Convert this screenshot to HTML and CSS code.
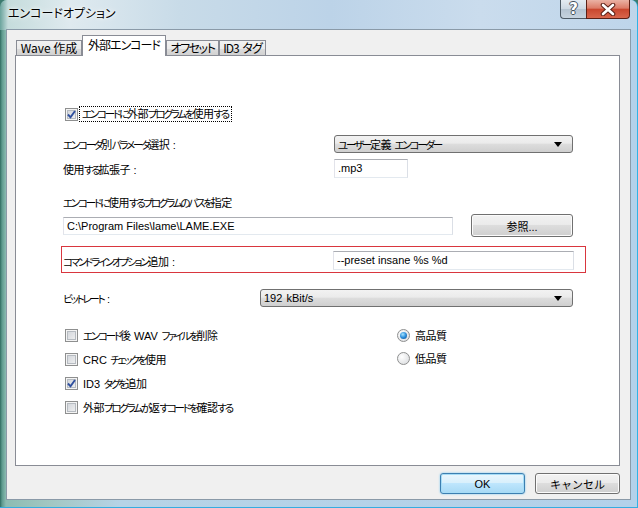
FILE: index.html
```html
<!DOCTYPE html>
<html lang="ja">
<head>
<meta charset="UTF-8">
<link rel="stylesheet" href="styles.css">
<title>エンコードオプション</title>
</head>
<body>

<div class="window">
  <div class="titlebar">
    <span class="title">エンコードオプション</span>
    <div class="caption-buttons">
      <span class="cap-btn help">?</span>
      <span class="cap-btn close">
        <svg width="18" height="13" viewBox="0 0 18 13">
          <path d="M4 2 L14 11 M14 2 L4 11" stroke="#5b2016" stroke-width="4.6" stroke-linecap="round"/>
          <path d="M4 2 L14 11 M14 2 L4 11" stroke="#fff" stroke-width="2.6" stroke-linecap="round"/>
        </svg>
      </span>
    </div>
  </div>

  <div class="client">
    <div class="tabs">
      <span class="tab t-wave">Wave 作成</span>
      <span class="tab t-ext active">外部エンコード</span>
      <span class="tab t-off">オフセット</span>
      <span class="tab t-id3">ID3 タグ</span>
    </div>

    <div class="panel">
      <!-- kana runs are narrowed (.k) to get the width of the old UI font -->
      <div class="row check-row first">
        <span class="check on"><svg width="11" height="11" viewBox="0 0 11 11"><path d="M2 5.5 L4.5 8.3 L9 2" fill="none" stroke="#2f4f9e" stroke-width="1.9"/></svg></span>
        <span class="focus-label"><span class="k">エンコードに</span>外部<span class="k">プログラムを</span>使用<span class="k">する</span></span>
      </div>

      <div class="row field-row param">
        <span><span class="k">エンコーダ</span>別<span class="k">パラメータ</span>選択 :</span>
        <div class="combo wide"><span><span class="k">ユーザー</span>定義 <span class="k">エンコーダー</span></span><span class="arrow"></span></div>
      </div>

      <div class="row field-row ext">
        <span>使用<span class="k">する</span>拡張子 :</span>
        <div class="field short">.mp3</div>
      </div>

      <div class="row path-label"><span class="k">エンコードに</span>使用<span class="k">するプログラムのパスを</span>指定</div>

      <div class="row path-row">
        <div class="field path">C:\Program Files\lame\LAME.EXE</div>
        <button class="btn browse">参照...</button>
      </div>

      <div class="cmd-row">
        <span><span class="k">コマンドラインオプション</span>追加 :</span>
        <div class="field cmd">--preset insane %s %d</div>
      </div>

      <div class="row bitrate-row">
        <span><span class="k">ビットレート</span> :</span>
        <div class="combo"><span class="lat">192 kBit/s</span><span class="arrow"></span></div>
      </div>

      <div class="options">
        <div class="opt-col">
          <div class="opt"><span class="check"></span><span><span class="k">エンコード</span>後 <span class="lat">WAV</span> <span class="k">ファイルを</span>削除</span></div>
          <div class="opt"><span class="check"></span><span><span class="lat">CRC</span> <span class="k">チェックを</span>使用</span></div>
          <div class="opt"><span class="check on"><svg width="11" height="11" viewBox="0 0 11 11"><path d="M2 5.5 L4.5 8.3 L9 2" fill="none" stroke="#2f4f9e" stroke-width="1.9"/></svg></span><span><span class="lat">ID3</span> <span class="k">タグを</span>追加</span></div>
          <div class="opt"><span class="check"></span><span>外部<span class="k">プログラムが</span>返<span class="k">すコードを</span>確認<span class="k">する</span></span></div>
        </div>
        <div class="radio-col">
          <div class="opt"><span class="radio on"></span><span>高品質</span></div>
          <div class="opt"><span class="radio"></span><span>低品質</span></div>
        </div>
      </div>
    </div>

    <div class="footer">
      <button class="btn default">OK</button>
      <button class="btn">キャンセル</button>
    </div>
  </div>
</div>

</body>
</html>
```

FILE: styles.css
```css
html, body {margin: 0; padding: 0;}
body {width: 638px; height: 508px; overflow: hidden; background: #3c7a6e;
  font-family: "Liberation Sans", "Noto Sans CJK JP", sans-serif; font-size: 11px;
  color: #000; font-feature-settings: "palt";}

/* window frame */
.window {
  box-sizing: border-box; width: 638px; height: 508px; padding: 0 7px 8px 7px;
  display: flex; flex-direction: column;
  background: linear-gradient(to right, #2f6b60 0, #5d9a8e 2px, #8cbcb2 6px, #a2c7c2 50px, #b6d3e6 120px, #b3d1ea 100%);
  border-right: 1px solid #2fb3e6; border-bottom: 1px solid #35ace0;
  border-radius: 7px 7px 0 0;
}
.titlebar {
  height: 30px; margin: 0 -7px; padding: 0 7px 0 8px;
  display: flex; justify-content: space-between; align-items: flex-start;
  border-radius: 7px 7px 0 0;
  background: linear-gradient(to right, #6aa39c 0, #c5dcdc 8px, #dfeaef 70px, #c8dbe8 180px, #bcd3e8 330px, #cadced 480px, #bed5ea 100%);
}
.title {line-height: 26px; font-size: 12px; font-family: "Noto Sans CJK JP", sans-serif;
  text-shadow: 0 0 6px #fff, 0 0 3px #fff;}
.caption-buttons {display: flex;}
.cap-btn {box-sizing: border-box; height: 19px; display: flex; align-items: center; justify-content: center;
  border: 1px solid #4d5a66; border-top: none;}
.help {width: 26px; border-radius: 0 0 0 4px; border-right: none;
  background: linear-gradient(#e4ebf2, #cdd8e3 50%, #b4c3d1 51%, #c6d3df);
  color: #fff; font: bold 15px "DejaVu Sans", sans-serif;
  text-shadow: 1px 0 #45515c, -1px 0 #45515c, 0 1px #45515c, 0 -1px #45515c;}
.close {width: 44px; border-radius: 0 0 4px 0; border-color: #5b2016;
  background: linear-gradient(#eab2a4, #dc7c68 45%, #c9472f 52%, #d8664c);}

.client {
  flex: 1; display: flex; flex-direction: column; padding: 0 10px 0 8px;
  background: #f0f0f0; box-shadow: 0 0 0 1px #8a9aa8;
}

/* tabs */
.tabs {display: flex; align-items: flex-end; height: 26px; padding-left: 1px;}
.tab {box-sizing: border-box; height: 16px; border: 1px solid #898c95; border-bottom: none;
  background: linear-gradient(#f2f2f2, #ebebeb 50%, #dddddd 51%, #cfcfcf);
  font-family: "Noto Sans CJK JP", sans-serif; font-size: 12px; letter-spacing: -1px; word-spacing: 2px;
  line-height: 14px; text-align: center; white-space: nowrap;}
.tab.active {height: 21px; background: #fff; position: relative; z-index: 1; line-height: 18px;}
.t-wave {width: 66px; letter-spacing: 0; word-spacing: 0;}
.t-ext {width: 84px;}
.t-off {width: 53px; letter-spacing: -1.4px;}
.t-id3 {width: 47px;}

.panel {box-sizing: border-box; height: 411px; margin-top: -1px; padding-left: 47px;
  border: 1px solid #898c95; background: #fff; letter-spacing: -0.5px; word-spacing: 1px;}
.k {font-size: 10.5px; letter-spacing: -2.2px;}
.lat {letter-spacing: 0;}

/* rows */
.row {display: flex; align-items: center; white-space: nowrap;}
.check-row {height: 16px; margin-top: 50px; padding-left: 2px;}
.focus-label {margin-left: 2px; padding: 0 3px 0 2px; line-height: 14px; outline: 1px dotted #000;}
.field-row {display: grid; grid-template-columns: 271px auto; align-items: center;}
.param {margin-top: 13px; height: 18px;}
.ext {margin-top: 6px; height: 19px;}
.path-label {margin-top: 16px; height: 16px;}
.path-row {margin-top: 4px; height: 23px; gap: 18px;}
.bitrate-row {display: grid; grid-template-columns: 197px auto; margin-top: 16px; height: 18px;}

.cmd-row {box-sizing: border-box; width: 525px; height: 27px; margin: 9px 0 0 -2px;
  padding: 2px 0 0 1px; border: 1px solid #d9363e;
  display: grid; grid-template-columns: 270px 241px; align-items: center; white-space: nowrap;}

/* controls */
.field {box-sizing: border-box; height: 19px; padding: 0 3px; line-height: 17px; background: #fff;
  letter-spacing: 0; word-spacing: 0; border: 1px solid; border-color: #abadb3 #dbdfe6 #e3e9ef #e2e3ea;}
.field.short {width: 74px;}
.field.path {width: 390px; height: 18px; line-height: 16px;}
.field.cmd {width: 241px;}

.combo {box-sizing: border-box; width: 313px; height: 18px; padding: 0 10px 0 3px;
  display: flex; align-items: center; justify-content: space-between;
  border: 1px solid #707070; border-radius: 3px;
  background: linear-gradient(#f2f2f2, #ebebeb 45%, #dddddd 50%, #cfcfcf);}
.combo.wide {width: 239px;}
.arrow {width: 0; height: 0; border-left: 4px solid transparent; border-right: 4px solid transparent;
  border-top: 5px solid #000;}

.btn {box-sizing: border-box; width: 85px; height: 21px; padding: 0;
  border: 1px solid #707070; border-radius: 3px;
  background: linear-gradient(#f2f2f2, #ebebeb 45%, #dddddd 50%, #cfcfcf);
  font: 11px "Liberation Sans", "Noto Sans CJK JP", sans-serif; letter-spacing: 0; word-spacing: 0; color: #000;
  box-shadow: inset 0 0 0 1px #fbfbfb;}
.btn.default {border-color: #3c7fb1; background: linear-gradient(#eaf6fd, #d9f0fc 45%, #bee6fd 50%, #a7d9f5);
  box-shadow: inset 0 0 0 1px #a6dcf6, 0 0 2px #6cc2ef;}
.btn.browse {width: 102px; height: 23px;}

.check {box-sizing: border-box; width: 13px; height: 13px; flex: none;
  display: flex; align-items: center; justify-content: center;
  border: 1px solid #8e8f8f; background: linear-gradient(135deg, #cdd1d7, #f4f4f4);
  box-shadow: inset 0 0 0 1px #f4f4f4, inset 0 0 0 2px #b6bbc1;}
.radio {box-sizing: border-box; width: 13px; height: 13px; flex: none; border-radius: 50%;
  display: flex; align-items: center; justify-content: center;
  border: 1px solid #8e8f8f; background: radial-gradient(circle at 35% 35%, #fff, #d6d8db);}
.radio.on::after {content: ""; width: 7px; height: 7px; border-radius: 50%;
  background: radial-gradient(circle at 40% 35%, #a6e4ff 0, #2b8ddb 50%, #0b4a88 100%);}

.options {display: flex; margin-top: 20px;}
.opt-col {width: 332px; padding-left: 2px;}
.opt {display: flex; align-items: center; height: 16px; margin-bottom: 8px; white-space: nowrap;}
.opt .check + span, .opt .radio + span {margin-left: 5px;}
.radio-col .opt {margin-bottom: 7px;}

.footer {display: flex; justify-content: flex-end; gap: 10px; margin-top: 7px;}
```
